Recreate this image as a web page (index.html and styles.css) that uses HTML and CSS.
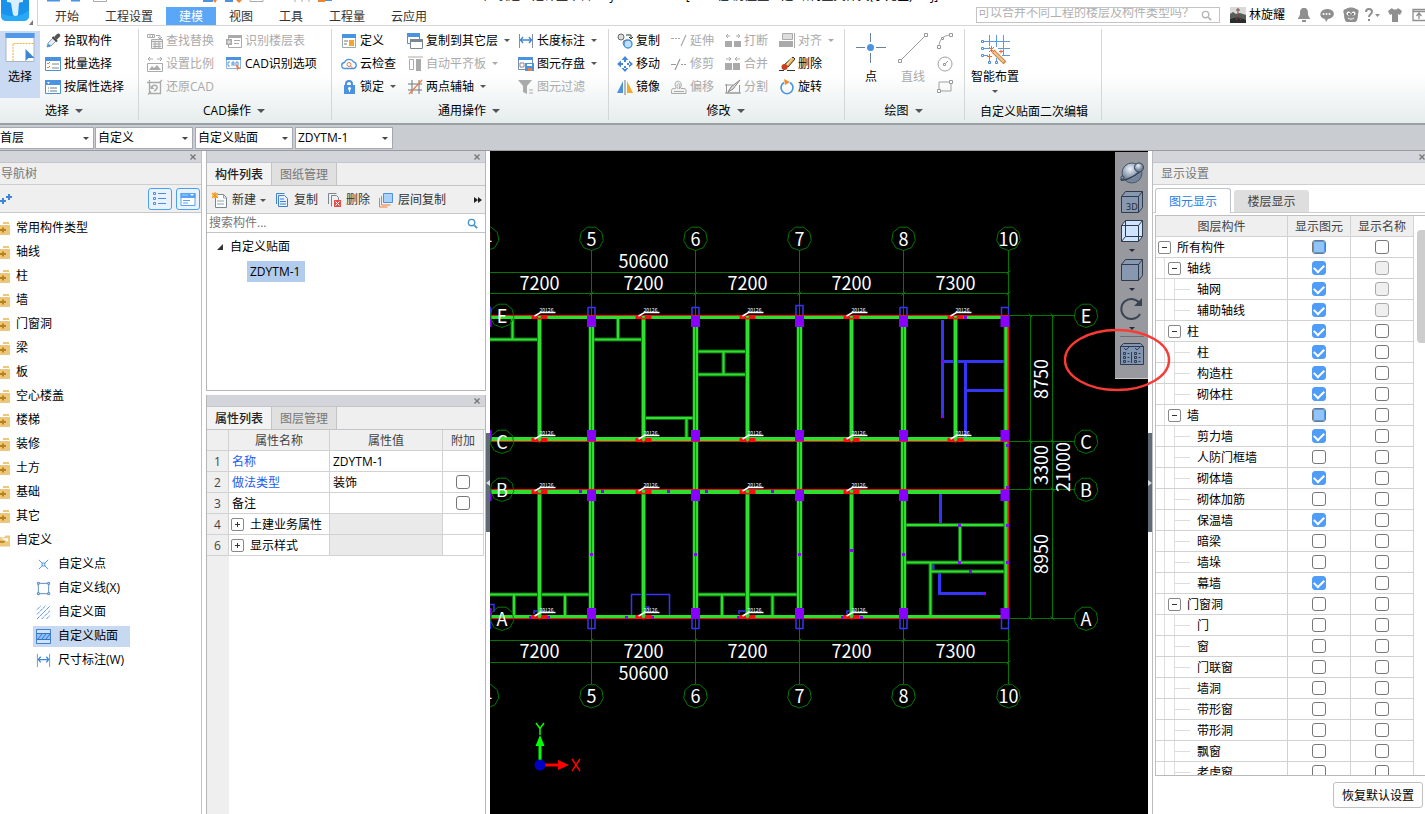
FILE: index.html
```html
<!DOCTYPE html>
<html lang="zh-CN">
<head>
<meta charset="utf-8">
<title>土建计量平台</title>
<link rel="stylesheet" href="styles.css">
</head>
<body>
<svg class="sprite" aria-hidden="true">
  <symbol id="i-pick" viewBox="0 0 16 16"><path d="M2 14l1-4 5-5 3 3-5 5z" fill="#e4eef6" stroke="#8ca2b2"/><path d="M2 14l1-3 3 1-2 2z" fill="#4b93e0"/><path d="M7.500 4l4.500 4.500" stroke="#444" stroke-width="2"/><path d="M9 4l3-3q2-1 3 .500t-.5 2.500L11.500 7z" fill="#555"/></symbol>
  <symbol id="i-batch" viewBox="0 0 16 16"><path d="M.5 2.500h15v12H.5z" fill="#fff" stroke="#4b8fd6"/><path d="M0 1h16v4H0z" fill="#4b93e0"/><path d="M2 7l1 1 2-2M2 11l1 1 2-2" stroke="#e08a2c" fill="none"/><path d="M7 8h7M7 12h7" stroke="#7a8791"/></symbol>
  <symbol id="i-prop" viewBox="0 0 16 16"><path d="M.5 1.500h15v13H.5z" fill="#fff" stroke="#4b8fd6"/><path d="M0 1h16v5H0z" fill="#4b93e0"/><path d="M2 3h3l-1.500 2z" fill="#fff"/><path d="M3 9h1M5 9h7M3 12h1M5 12h7" stroke="#6d7d89"/></symbol>
  <symbol id="i-find" viewBox="0 0 16 16"><path d="M.5 1.500h7v3h-7zM3 1v4M5.500 1v4M9 2.500h4v3M11 4l2 2 2-2" fill="none" stroke="#aaa"/><path d="M4.500 6.500h11v9h-11z" fill="#eee" stroke="#aaa"/><path d="M4 8.500h12M6 11h8M6 13.500h8M8 9v6M12 9v6" stroke="#aaa"/></symbol>
  <symbol id="i-scale" viewBox="0 0 16 16"><path d="M1 3h5M3 1L1 3l2 2M10 3h5M13 1l2 2-2 2" fill="none" stroke="#aaa"/><path d="M.5 7.500h15v8H.5z" fill="#fff" stroke="#aaa"/><path d="M2 14l3-4 2 2 3-3 4 5z" fill="#aaa"/></symbol>
  <symbol id="i-restore" viewBox="0 0 16 16"><path d="M2.500 1v13.500H13.500V3.500H0M1 15.500l3-3M15 1l-3 3" fill="none" stroke="#aaa" stroke-width="1.300"/><path d="M5 8c1-3 6-2 5 1-.5 2-1.500 2-3 3" fill="none" stroke="#aaa" stroke-width="1.500"/><path d="M3.500 6v4h4z" fill="#aaa"/></symbol>
  <symbol id="i-floor" viewBox="0 0 16 16"><path d="M2.500 2.500h13v12h-13z" fill="#fff" stroke="#aaa"/><path d="M2 2h14v3H2zM0 6h6v6H0zM8 7h6v1H8zM8 10h5v1H8z" fill="#aaa"/><path d="M1.500 7.500h3v3h-3z" fill="#ddd"/></symbol>
  <symbol id="i-cad" viewBox="0 0 16 16"><path d="M.5 1.500h14v11H.5z" fill="#fff" stroke="#8fb5df"/><path d="M0 1h15v3H0z" fill="#4b93e0"/><path d="M4 6H2v4h2M6 10V6h2v4M6 8h2M10 6h2v4h-2z" fill="none" stroke="#5b9be0"/><path d="M10 8l5 5h-3l-1 2z" fill="#ee7c45"/></symbol>
  <symbol id="i-define" viewBox="0 0 16 16"><path d="M1.500 1.500h13v13h-13z" fill="#fff" stroke="#9aa"/><path d="M1 1h14v4H1z" fill="#4b93e0"/><path d="M3 8h4M3 11h3" stroke="#777"/><path d="M8 7h5v6H8z" fill="#f3a52e"/></symbol>
  <symbol id="i-cloud" viewBox="0 0 16 16"><path d="M4 12.500a3 3 0 0 1-.5-6A5 5 0 0 1 12.500 6a3.300 3.300 0 0 1 0 6.500z" fill="#fff" stroke="#4b93e0" stroke-width="1.300"/><circle cx="8" cy="8.500" r="2" fill="none" stroke="#ee7c45"/><path d="M9.500 10l2 2" stroke="#ee7c45"/></symbol>
  <symbol id="i-lock" viewBox="0 0 16 16"><path d="M5 7V5a3 3 0 0 1 6 0v2" fill="none" stroke="#4b8fd6" stroke-width="2"/><path d="M3 6h11v9H3z" fill="#4b93e0"/><path d="M8 8h1v5H8z" fill="#fff"/><circle cx="8.500" cy="9.500" r="1.500" fill="#fff"/></symbol>
  <symbol id="i-copyfloor" viewBox="0 0 16 16"><path d="M.5 1.500h12v9H.5z" fill="#fff" stroke="#4b93e0"/><path d="M0 0h13v4H0z" fill="#4b93e0"/><path d="M3.500 6.500h12v9h-12z" fill="#fff" stroke="#7b8790"/><path d="M3 6h13v3H3z" fill="#7b8790"/></symbol>
  <symbol id="i-slab" viewBox="0 0 16 16"><path d="M1 1h15" stroke="#aaa"/><path d="M2.500 3.500h4v10h-4z" fill="#fff" stroke="#aaa"/><path d="M9 3h5v12H9z" fill="#aaa"/></symbol>
  <symbol id="i-axis" viewBox="0 0 16 16"><path d="M5 1v14M12 1v14M1 5h14M1 11h14" stroke="#6d7780"/><path d="M2 15L15 1" stroke="#ee7c45" stroke-width="1.300"/></symbol>
  <symbol id="i-dim" viewBox="0 0 16 16"><path d="M1.500 1v14M14.500 1v14" stroke="#85919a"/><path d="M3 7h10M5 4L2.500 7 5 10M11 4l2.500 3L11 10" fill="none" stroke="#3f86d8" stroke-width="1.400"/></symbol>
  <symbol id="i-save" viewBox="0 0 16 16"><path d="M.5 2.500h14v11H.5z" fill="#fff" stroke="#7b8fa4"/><path d="M0 1h15v3H0z" fill="#4b93e0"/><path d="M2 7h4v4H2z" fill="none" stroke="#889"/><path d="M7 7h9v8H7z" fill="#4b93e0"/><path d="M9 8h5v2H9z" fill="#fff"/><path d="M10 12h4v3h-4z" fill="#ee7c45"/></symbol>
  <symbol id="i-filter" viewBox="0 0 16 16"><path d="M0 1h14L9 7v8l-4-2V7z" fill="#aaa"/><path d="M11 11h4M11 14h4" stroke="#aaa"/></symbol>
  <symbol id="i-copy2" viewBox="0 0 16 16"><circle cx="4" cy="4" r="3" fill="#ddd" stroke="#666"/><circle cx="9" cy="10" r="3" fill="#fff" stroke="#777"/><circle cx="11" cy="11" r="4" fill="#bfe0fb" stroke="#3f8ed8" stroke-width="1.300"/><path d="M9 2h5v3M12 4l2 2 2-2" fill="none" stroke="#333"/></symbol>
  <symbol id="i-move" viewBox="0 0 16 16"><path d="M8 0l3.500 4h-7zM8 16l3.500-4h-7zM0 8l4-3.500v7zM16 8l-4-3.500v7zM7 3h2v3H7zM7 10h2v3H7zM3 7h3v2H3zM10 7h3v2h-3z" fill="#4488d8"/></symbol>
  <symbol id="i-mirror" viewBox="0 0 16 16"><path d="M6 2v12H0z" fill="#4b93e0"/><path d="M8 1v15" stroke="#777"/><path d="M10 2v12h6z" fill="#f3aa25"/></symbol>
  <symbol id="i-extend" viewBox="0 0 16 16"><path d="M0 5.500h3M4 5.500h2M7 5.500h2M10 13l5-11" stroke="#aaa" stroke-width="1.200"/></symbol>
  <symbol id="i-trim" viewBox="0 0 16 16"><path d="M0 8.500h5M4 14L9 3M10 8.500h2M13 8.500h2" stroke="#999" stroke-width="1.200"/></symbol>
  <symbol id="i-offset" viewBox="0 0 16 16"><path d="M.5 14.500v-3q0-2 2-2h2q1 0 0-2C2 .500 12 .500 10 7.500q-1 2 0 2h3q2 0 2 2v3z" fill="#f2f2f2" stroke="#aaa"/><path d="M3 12.500h10M7 10C4 4 10 3 8.500 7.500V10" fill="none" stroke="#aaa"/></symbol>
  <symbol id="i-break" viewBox="0 0 16 16"><path d="M0 8h7v6H0zM9 8h7v6H9z" fill="#aaa"/><path d="M1 3h4M3 1L1 3l2 2M11 3h4M13 1l2 2-2 2" fill="none" stroke="#aaa"/></symbol>
  <symbol id="i-merge" viewBox="0 0 16 16"><path d="M0 7h7v7H0zM8 7h7v7H8z" fill="#aaa"/><path d="M1 3h4M4 1l2 2-2 2M15 3h-4M12 1l-2 2 2 2" fill="none" stroke="#aaa"/></symbol>
  <symbol id="i-split" viewBox="0 0 16 16"><path d="M1.500 5v9h13V6M0 6h8M0 14h16" fill="none" stroke="#999"/><path d="M3 13l3-5 9-7-7 9z" fill="#ddd" stroke="#888"/></symbol>
  <symbol id="i-align" viewBox="0 0 16 16"><path d="M3.500.5h10v6h-10z" fill="#ddd" stroke="#aaa"/><path d="M0 8h14v6H0z" fill="#aaa"/><path d="M15.500 0v15" stroke="#aaa"/></symbol>
  <symbol id="i-erase" viewBox="0 0 16 16"><path d="M14 1l2 2-7 8-4-2z" fill="#f0b550" stroke="#333"/><path d="M13 2L7 10" stroke="#fff3c8"/><circle cx="5.500" cy="11" r="3" fill="#c64020"/><path d="M0 14.500h5M8 14.500h8" stroke="#333"/></symbol>
  <symbol id="i-rotate" viewBox="0 0 16 16"><path d="M11 3.500a6 6 0 1 1-6 0" fill="none" stroke="#4593dc" stroke-width="1.600"/><path d="M5 0l6 3-5 3z" fill="#ee8a32"/></symbol>
  <symbol id="i-arc" viewBox="0 0 16 16"><path d="M2 14C2 7 6 2 14 2" fill="none" stroke="#a0a0a0"/><path d="M.5 12.500h3v3h-3zM12.500.5h3v3h-3zM4.500 4.500h2v2h-2z" fill="#fff" stroke="#999"/></symbol>
  <symbol id="i-circle" viewBox="0 0 16 16"><circle cx="8" cy="8" r="7" fill="none" stroke="#a0a0a0"/><path d="M8 8l3-3" stroke="#999"/><path d="M6.500 7.500h2v2h-2z" fill="#fff" stroke="#999"/></symbol>
  <symbol id="i-rect" viewBox="0 0 16 16"><path d="M2 3h12v9H2z" fill="none" stroke="#a0a0a0"/><path d="M.5 10.500h3v3h-3zM12.500 1.500h3v3h-3z" fill="#fff" stroke="#999"/></symbol>
  <symbol id="i-folder" viewBox="0 0 10 13"><path d="M3 0h6v2H3zM0 3h10v10H0z" fill="#ecc67b"/><path d="M0 8h6M3 5.500v5" stroke="#b98320" stroke-width="2"/></symbol>
  <symbol id="i-folderopen" viewBox="0 0 11 13"><path d="M0 3h5l1-2h5v12H0z" fill="#ecc67b"/><path d="M1 4h8v4z" fill="#fff"/><path d="M0 8h5" stroke="#b98320" stroke-width="2"/></symbol>
  <symbol id="i-pt" viewBox="0 0 16 16"><path d="M3 3l4 4M13 3L9 7M3 13l4-4M13 13L9 9M6.500 6.500h3v3h-3z" fill="none" stroke="#4b93e0"/></symbol>
  <symbol id="i-line" viewBox="0 0 16 16"><path d="M2.500 2.500h11v11h-11z" fill="none" stroke="#5b88b8"/><path d="M1.500 1.500h2v2h-2zM12.500 1.500h2v2h-2zM1.500 12.500h2v2h-2zM12.500 12.500h2v2h-2z" fill="#fff" stroke="#3f86d8"/></symbol>
  <symbol id="i-area" viewBox="0 0 16 16"><path d="M1 5l4-4M1 10l9-9M1 15L15 1M6 15l9-9M11 15l4-4" stroke="#4b8fd6" stroke-dasharray="4 .7"/></symbol>
  <symbol id="i-face" viewBox="0 0 15 15"><path d="M.5.5h14v14H.5z" fill="#cfe4fb" stroke="#3f7fcc"/><path d="M1 4h13v7H1z" fill="#8cc0f8"/><path d="M1 4.500h13M1 10.500h13M2 10l4-5M6 10l4-5M10 10l4-5" stroke="#3574bd"/></symbol>
  <symbol id="i-new" viewBox="0 0 16 16"><path d="M3.500 2.500h8l3 3v10h-11z" fill="#fff" stroke="#7b8790"/><path d="M11.500 2v4h3M5 9h7M5 12h7" fill="none" stroke="#8fa0ae"/><path d="M0 1h6v5H0z" fill="#f8c65a"/><path d="M0 1l6 5M6 1L0 6M3 0v6" stroke="#ee8b25"/></symbol>
  <symbol id="i-copydoc" viewBox="0 0 16 16"><path d="M2.500 12V1.500h8" fill="none" stroke="#3f7fcc"/><path d="M4.500 3.500h6l3 3v8h-9z" fill="#e6f2ff" stroke="#3f7fcc"/><path d="M6 7h4M6 9.500h6M6 12h6" stroke="#3f7fcc"/></symbol>
  <symbol id="i-deldoc" viewBox="0 0 16 16"><path d="M2.500 12V1.500h8M5.500 14.500v-11h5l2 2V8" fill="none" stroke="#7b8790"/><path d="M8 8h7v7H8z" fill="#e44f4f"/><path d="M9.500 9.500l4 4M13.500 9.500l-4 4" stroke="#fff"/></symbol>
  <symbol id="i-layers" viewBox="0 0 16 16"><path d="M1.500 6v9h8" fill="none" stroke="#ee7c32"/><path d="M3.500 4v9h9" fill="none" stroke="#ee7c32"/><path d="M5.500 1.500h9v9h-9z" fill="#a9d1fb" stroke="#4b93e0"/></symbol>
  <symbol id="i-glass" viewBox="0 0 12 12"><circle cx="5" cy="5" r="3.500" fill="none" stroke="currentColor" stroke-width="1.500"/><path d="M8 8l3 3" stroke="currentColor" stroke-width="2"/></symbol>
  <symbol id="i-cube" viewBox="0 0 24 24"><path d="M1.500 6.500l4-5h17v16l-4 5h-17z" fill="#8798b0" stroke="#2f3a4b"/><path d="M1.500 6.500h17v16M18.500 6.500l4-5" fill="none" stroke="#2f3a4b"/></symbol>
  <symbol id="i-close" viewBox="0 0 6 6"><path d="M.5.5l5 5M5.500.5l-5 5" stroke="#777" stroke-width="1.400"/></symbol>
</svg>

<header class="topbar">
  <div class="brand">
    <svg class="logo" viewBox="0 0 38 25" aria-hidden="true">
      <defs><linearGradient id="lg" x1="0" y1="0" x2="0" y2="1"><stop offset="0" stop-color="#1c8fe8"/><stop offset="1" stop-color="#1593f0"/></linearGradient></defs>
      <rect x="1" y="-9" width="28" height="30" rx="5" fill="url(#lg)"/>
      <path d="M1 13c7 4 20 5 28-3v6q0 5-5 5H6q-5 0-5-5z" fill="#35b7fb" opacity=".6"/>
      <path d="M7-2h16v4q-3 0-4 1l-1 12q-2 2-5 0L11 3q-1-1-4-1z" fill="#d8f0fd"/>
      <path d="M33 20v5h-4z" fill="#777"/>
    </svg>
  </div>
  <div class="topmain">
    <svg class="quick" viewBox="38 0 310 3" aria-hidden="true">
      <path d="M47 0v1.500h13V0M71 0v1.500h9V0M203 0h10v2h-10zM225 0h8v2h-8zM322 0h10v1h-10z" fill="#4b93e0"/>
      <path d="M93.500 0v1.500h13V0M250 0v1.500h13V0M295 0v2M302 0v2M309 0v2" fill="none" stroke="#aaa"/>
      <path d="M213 0h4l-2 3zM236 0h6l-3 3zM318 0h7v2h-7z" fill="#ee8432"/>
    </svg>
    <div class="wintitle"><span>广联达土建计量平台 GTJ</span><span>[C:\工程\房屋量土建\结构量文件夹(小元区).GTJ]</span></div>
    <nav class="tabs">
      <a href="#">开始</a><a href="#">工程设置</a><a href="#" class="on">建模</a><a href="#">视图</a><a href="#">工具</a><a href="#">工程量</a><a href="#">云应用</a>
    </nav>
    <div class="account">
      <div class="ask"><input type="text" aria-label="搜索" placeholder="可以合并不同工程的楼层及构件类型吗？"><svg viewBox="0 0 12 12"><use href="#i-glass"/></svg></div>
      <svg class="avatar" viewBox="0 0 16 16" aria-hidden="true"><path d="M0 0h16v16H0z" fill="#d8dad8"/><path d="M0 7l3-2 3 2 4-1 6 2v8H0z" fill="#585f59"/><path d="M0 12l8-2 8 3v3H0z" fill="#292d2b"/><path d="M8 1v9M6 3h4M8 9l-2 4M8 9l3 4" stroke="#80474a"/></svg>
      <span class="user">林旋耀</span>
      <svg class="acts" viewBox="0 0 127 16" aria-hidden="true"><g fill="#8f8f8f">
        <path d="M6 1c3 0 4 2 4 5 0 4 2 4 2 6H0c0-2 2-2 2-6 0-3 1-5 4-5zM4 13h4v2H4z"/>
        <path d="M29 2c9 0 9 9 1 10l-2 3-1-3c-7-1-6-10 2-10z"/>
        <path d="M48 2c2-2 8-2 10 0 3 0 3 3 2 5 0 4-1 8-3 8h-8c-2 0-3-4-3-8-1-2-1-5 2-5z"/>
        <path d="M77 7h5l-2.500 3zM94 1c1 2 5 2 6 0l4 3-2 4-2-1v8h-6V7l-2 1-2-4z"/></g>
        <g fill="#fff"><circle cx="25.500" cy="7" r="1"/><circle cx="28.500" cy="7" r="1"/><circle cx="31.500" cy="7" r="1"/><circle cx="50.500" cy="6.500" r="2"/><circle cx="55.500" cy="6.500" r="2"/></g>
        <path d="M50 11c2 1.500 4 1.500 6 0" fill="none" stroke="#fff"/>
        <circle cx="51" cy="7" r="1" fill="#555"/><circle cx="55" cy="7" r="1" fill="#555"/>
        <path d="M68 5c0-4 6-4 6 0 0 2-3 2-3 5M71 12v2" fill="none" stroke="#8f8f8f" stroke-width="2"/>
        <path d="M115 2.500h14v11h-14zM115 4.500h14M121 12V7M118.500 9l2.500-3 2.500 3" fill="none" stroke="#8f8f8f" stroke-width="1.300"/>
      </svg>
    </div>
  </div>
</header>

<section class="ribbon" aria-label="建模">
  <div class="group g1">
    <div class="gbody">
      <button class="big active"><svg viewBox="0 0 29 30" class="i30"><path d="M.5.500h28v28H.5z" fill="#fff" stroke="#a8b6c8"/><path d="M0 0h29v5H0z" fill="#5298e8"/><path d="M7.500 28V10.500H28" fill="none" stroke="#f0b030" stroke-dasharray="2 1"/><path d="M20 16v12l3-3h6z" fill="#3c84d6"/></svg>选择</button>
      <div class="col"><button><svg><use href="#i-pick"/></svg>拾取构件</button><button><svg><use href="#i-batch"/></svg>批量选择</button><button><svg><use href="#i-prop"/></svg>按属性选择</button></div>
    </div>
    <button class="glabel">选择<i class="tri"></i></button>
  </div>
  <div class="group g2">
    <div class="gbody">
      <div class="col"><button disabled><svg><use href="#i-find"/></svg>查找替换</button><button disabled><svg><use href="#i-scale"/></svg>设置比例</button><button disabled><svg><use href="#i-restore"/></svg>还原CAD</button></div>
      <div class="col"><button disabled><svg><use href="#i-floor"/></svg>识别楼层表</button><button><svg><use href="#i-cad"/></svg>CAD识别选项</button></div>
    </div>
    <button class="glabel">CAD操作<i class="tri"></i></button>
  </div>
  <div class="group g3">
    <div class="gbody">
      <div class="col"><button><svg><use href="#i-define"/></svg>定义</button><button><svg><use href="#i-cloud"/></svg>云检查</button><button><svg><use href="#i-lock"/></svg>锁定<i class="tri s"></i></button></div>
      <div class="col"><button><svg><use href="#i-copyfloor"/></svg>复制到其它层<i class="tri s"></i></button><button disabled><svg><use href="#i-slab"/></svg>自动平齐板<i class="tri s"></i></button><button><svg><use href="#i-axis"/></svg>两点辅轴<i class="tri s"></i></button></div>
      <div class="col"><button><svg><use href="#i-dim"/></svg>长度标注<i class="tri s"></i></button><button><svg><use href="#i-save"/></svg>图元存盘<i class="tri s"></i></button><button disabled><svg><use href="#i-filter"/></svg>图元过滤</button></div>
    </div>
    <button class="glabel">通用操作<i class="tri"></i></button>
  </div>
  <div class="group g4">
    <div class="gbody">
      <div class="col"><button><svg><use href="#i-copy2"/></svg>复制</button><button><svg><use href="#i-move"/></svg>移动</button><button><svg><use href="#i-mirror"/></svg>镜像</button></div>
      <div class="col"><button disabled><svg><use href="#i-extend"/></svg>延伸</button><button disabled><svg><use href="#i-trim"/></svg>修剪</button><button disabled><svg><use href="#i-offset"/></svg>偏移</button></div>
      <div class="col"><button disabled><svg><use href="#i-break"/></svg>打断</button><button disabled><svg><use href="#i-merge"/></svg>合并</button><button disabled><svg><use href="#i-split"/></svg>分割</button></div>
      <div class="col"><button disabled><svg><use href="#i-align"/></svg>对齐<i class="tri s"></i></button><button><svg><use href="#i-erase"/></svg>删除</button><button><svg><use href="#i-rotate"/></svg>旋转</button></div>
    </div>
    <button class="glabel">修改<i class="tri"></i></button>
  </div>
  <div class="group g5">
    <div class="gbody">
      <button class="big"><svg viewBox="0 0 30 30" class="i30"><path d="M14.500 0v30M0 14.500h30" stroke="#6b8296"/><path d="M9 14.500h11M14.500 9v11" stroke="#fff" stroke-width="2"/><circle cx="14.500" cy="14.500" r="3.500" fill="#4b93e0"/></svg>点</button>
      <button class="big" disabled><svg viewBox="0 0 30 30" class="i30"><path d="M3 27L27 3" stroke="#999"/><path d="M.5 26.500h3v3h-3zM26.500.5h3v3h-3z" fill="#fff" stroke="#999"/></svg>直线</button>
      <div class="col icons"><button disabled aria-label="弧线"><svg><use href="#i-arc"/></svg></button><button disabled aria-label="圆"><svg><use href="#i-circle"/></svg></button><button disabled aria-label="矩形"><svg><use href="#i-rect"/></svg></button></div>
    </div>
    <button class="glabel">绘图<i class="tri"></i></button>
  </div>
  <div class="group g6">
    <div class="gbody">
      <button class="big wide"><svg viewBox="0 0 30 30" class="i30"><path d="M3 7.500h27M3 14.500h7M18 14.500h12M3 21.500h5M22 21.500h8M9.500 1v11M9.500 24v4M16.500 1v12M16.500 24v4M23.500 1v20" stroke="#5b9be6" fill="none"/><path d="M1.500 6.500h2v2h-2zM1.500 13.500h2v2h-2zM1.500 20.500h2v2h-2zM8.500 27.500h2v2h-2zM15.500 27.500h2v2h-2z" fill="#fff" stroke="#4b8fdc"/><path d="M13 17l12 12" stroke="#c98547" stroke-width="4"/><path d="M13 17l11 11" stroke="#f4c58f" stroke-width="2"/><path d="M9 13l5 5M14 13l-5 5M11.500 12v6M7 22.500h5M9.500 20v5M19 17.500h4M21 15.500v4" stroke="#ee6b30"/></svg>智能布置<i class="tri s"></i></button>
    </div>
    <div class="glabel low">自定义贴面二次编辑</div>
  </div>
</section>

<div class="selectors">
  <label class="pick first"><select aria-label="楼层"><option>首层</option></select></label>
  <label class="pick"><select aria-label="构件类别"><option>自定义</option></select></label>
  <label class="pick"><select aria-label="构件类型"><option>自定义贴面</option></select></label>
  <label class="pick"><select aria-label="构件"><option>ZDYTM-1</option></select></label>
</div>

<main class="work">
  <aside class="nav">
    <div class="strip"><button aria-label="关闭"><svg><use href="#i-close"/></svg></button></div>
    <h2>导航树</h2>
    <div class="navtools">
      <svg class="plus" viewBox="0 0 12 12" aria-hidden="true"><path d="M0 8h6M3 5v6M6 4h6M9 1v6" stroke="#3f86d8" stroke-width="2"/></svg>
      <button aria-label="列表"><svg viewBox="0 0 16 16"><path d="M1.500 1.500h2v2h-2zM1.500 6.500h2v2h-2zM1.500 11.500h2v2h-2zM6 2.500h8M6 7.500h8M6 12.500h8" fill="none" stroke="#4b8fd6"/></svg></button>
      <button aria-label="面板"><svg viewBox="0 0 16 16"><path d="M1 2.500h14v12H1z" fill="#fff" stroke="#57a3f5"/><path d="M.5 2h15v5H.5z" fill="#57a3f5"/><path d="M3 3.500v1M5 3.500v1M7 3.500v1" stroke="#fff"/><path d="M10 3h4l-2 2z" fill="#fff"/><path d="M3 9.500h7M3 12h5" stroke="#57a3f5"/></svg></button>
    </div>
    <ul class="navtree">
      <li><svg><use href="#i-folder"/></svg>常用构件类型</li><li><svg><use href="#i-folder"/></svg>轴线</li><li><svg><use href="#i-folder"/></svg>柱</li><li><svg><use href="#i-folder"/></svg>墙</li><li><svg><use href="#i-folder"/></svg>门窗洞</li><li><svg><use href="#i-folder"/></svg>梁</li><li><svg><use href="#i-folder"/></svg>板</li><li><svg><use href="#i-folder"/></svg>空心楼盖</li><li><svg><use href="#i-folder"/></svg>楼梯</li><li><svg><use href="#i-folder"/></svg>装修</li><li><svg><use href="#i-folder"/></svg>土方</li><li><svg><use href="#i-folder"/></svg>基础</li><li><svg><use href="#i-folder"/></svg>其它</li><li><svg><use href="#i-folderopen"/></svg>自定义</li>
      <li class="sub"><span><svg><use href="#i-pt"/></svg>自定义点</span></li><li class="sub"><span><svg><use href="#i-line"/></svg>自定义线(X)</span></li><li class="sub"><span><svg><use href="#i-area"/></svg>自定义面</span></li><li class="sub"><span class="sel"><svg><use href="#i-face"/></svg>自定义贴面</span></li><li class="sub"><span><svg><use href="#i-dim"/></svg>尺寸标注(W)</span></li>
    </ul>
  </aside>

  <div class="mid">
    <section class="panel top">
      <div class="strip"><button aria-label="关闭"><svg><use href="#i-close"/></svg></button></div>
      <div class="ptabs"><button class="on">构件列表</button><button>图纸管理</button></div>
      <div class="ptools"><button><svg><use href="#i-new"/></svg>新建<i class="tri s"></i></button><button><svg><use href="#i-copydoc"/></svg>复制</button><button><svg><use href="#i-deldoc"/></svg>删除</button><button><svg><use href="#i-layers"/></svg>层间复制</button><svg class="more" viewBox="0 0 8 6"><path d="M0 0l4 3-4 3zM4 0l4 3-4 3z" fill="#222"/></svg></div>
      <div class="psearch"><input type="text" aria-label="搜索构件" placeholder="搜索构件..."><svg viewBox="0 0 12 12"><use href="#i-glass"/></svg></div>
      <ul class="ctree"><li><svg viewBox="0 0 6 6"><path d="M6 0v6H0z" fill="#333"/></svg>自定义贴面</li><li class="leaf"><span>ZDYTM-1</span></li></ul>
    </section>
    <section class="panel bottom">
      <div class="strip"><button aria-label="关闭"><svg><use href="#i-close"/></svg></button></div>
      <div class="ptabs"><button class="on">属性列表</button><button>图层管理</button></div>
      <div class="pbody">
      <table class="props">
        <colgroup><col class="c1"><col class="c2"><col class="c3"><col class="c4"></colgroup>
        <tr><th></th><th>属性名称</th><th>属性值</th><th>附加</th></tr>
        <tr><th>1</th><td class="blue">名称</td><td>ZDYTM-1</td><td></td></tr>
        <tr><th>2</th><td class="blue">做法类型</td><td>装饰</td><td class="mid-c"><input type="checkbox" aria-label="做法类型附加"></td></tr>
        <tr><th>3</th><td>备注</td><td></td><td class="mid-c"><input type="checkbox" aria-label="备注附加"></td></tr>
        <tr><th>4</th><td><div class="exp"><button class="tog plusbox" aria-label="展开"></button>土建业务属性</div></td><td class="off"></td><td></td></tr>
        <tr><th>6</th><td><div class="exp"><button class="tog plusbox" aria-label="展开"></button>显示样式</div></td><td class="off"></td><td></td></tr>
      </table>
      </div>
    </section>
  </div>

  <div class="split"><button aria-label="收起左侧"><svg viewBox="0 0 4 6"><path d="M4 0v6L0 3z" fill="#d8dde2"/></svg></button></div>

  <section class="canvas">
    <svg id="plan" viewBox="490 151 658 663" preserveAspectRatio="xMinYMin slice" role="img" aria-label="首层平面图"></svg>
    <div class="viewbar">
      <button aria-label="动态观察"><svg viewBox="0 0 24 24"><defs><radialGradient id="ball" cx=".4" cy=".3"><stop offset="0" stop-color="#eef4fb"/><stop offset="1" stop-color="#74859b"/></radialGradient></defs><circle cx="12" cy="12" r="10" fill="url(#ball)" stroke="#46566b"/><path d="M1 18C0 22 19 15 23 6" fill="none" stroke="#344052" stroke-width="1.500"/><circle cx="19" cy="6.500" r="4.500" fill="url(#ball)" stroke="#344052"/><circle cx="2.500" cy="16.500" r="1.500" fill="#8798b0" stroke="#344052"/></svg></button>
      <button class="b3d" aria-label="三维"><svg viewBox="0 0 24 24"><use href="#i-cube"/><text x="6" y="20" class="t3d">3D</text></svg></button>
      <button aria-label="俯视"><svg viewBox="0 0 24 24"><path d="M1.500 6.500l4-5h17v16l-4 5h-17z" fill="#cfe5ff" stroke="#2f3a4b"/><path d="M1.500 6.500h17v16M18.500 6.500l4-5M5.500 1.500v16h17M5.500 17.500l-4 5" fill="none" stroke="#2f3a4b"/></svg></button>
      <i class="tri s"></i>
      <button aria-label="实体"><svg viewBox="0 0 24 24"><use href="#i-cube"/></svg></button>
      <i class="tri s"></i>
      <button aria-label="旋转视图"><svg viewBox="0 0 24 24"><path d="M20 17a10 10 0 1 1 0-10" fill="none" stroke="#39434f" stroke-width="2"/><path d="M22 1v8h-8z" fill="#39434f"/></svg></button>
      <i class="tri s"></i>
      <hr>
      <button aria-label="显示设置"><svg viewBox="0 0 24 24"><path d="M.5 4.500l3-3h17l3 3v18H.5z" fill="#8296b3" stroke="#2f3a4b"/><path d="M0 4.500h24M11.500 10v11M4 6l2 2 3-3M15 6l2 2 3-3" fill="none" stroke="#2f3a4b"/><path d="M3.500 10.500h2v2h-2zM3.500 14.500h2v2h-2zM3.500 18.500h2v2h-2zM14.500 10.500h2v2h-2zM14.500 14.500h2v2h-2zM14.500 18.500h2v2h-2zM7.500 11.500h2M7.500 15.500h2M7.500 19.500h2M18.500 11.500h2M18.500 15.500h2M18.500 19.500h2" fill="none" stroke="#2f3a4b"/></svg></button>
    </div>
    <svg class="mark" viewBox="0 0 108 64" aria-hidden="true"><ellipse cx="54" cy="32" rx="52" ry="30" fill="none" stroke="#f83b36" stroke-width="2.500"/></svg>
  </section>

  <div class="split"><button aria-label="收起右侧"><svg viewBox="0 0 4 6"><path d="M0 0v6l4-3z" fill="#d8dde2"/></svg></button></div>

  <aside class="display">
    <div class="strip"><button aria-label="关闭"><svg><use href="#i-close"/></svg></button></div>
    <h2>显示设置</h2>
    <div class="dtabs"><button class="on">图元显示</button><button>楼层显示</button></div>
    <div class="dscroll">
      <table class="layers">
        <colgroup><col><col class="n"><col class="n"></colgroup>
        <thead><tr><th>图层构件</th><th>显示图元</th><th>显示名称</th></tr></thead>
        <tbody id="layers"></tbody>
      </table>
      <div class="track"><div class="thumb"></div></div>
    </div>
    <div class="dfoot"><button>恢复默认设置</button></div>
  </aside>
</main>
<script src="app.js"></script>
</body>
</html>
```

FILE: styles.css
```css
* { box-sizing: border-box; }
body { margin: 0; height: 100vh; display: flex; flex-direction: column; overflow: hidden; background: #fff; color: #000; font: 12px/16px "Open Sans", "Noto Sans CJK SC", sans-serif; }
button, input, select { font: inherit; color: inherit; margin: 0; padding: 0; border: 0; background: none; }
button { white-space: nowrap; }
svg { display: block; flex: none; }
ul { list-style: none; margin: 0; padding: 0; }
h2 { margin: 0; font: inherit; }
.sprite { position: absolute; width: 0; height: 0; }
.tri { flex: none; border: 4px solid transparent; border-top-color: #555; border-bottom: 0; width: 0; height: 0; }
.tri.s { border-width: 3px; border-bottom: 0; }

.topbar { display: flex; height: 26px; flex: none; }
.brand { width: 38px; border-right: 1px solid #d5d5d5; }
.logo { width: 38px; height: 25px; }
.topmain { flex: 1; display: flex; position: relative; overflow: hidden; align-items: flex-end; border-bottom: 1px solid #d5d5d5; padding-left: 4px; }
.quick { position: absolute; left: 0; top: 0; width: 310px; height: 3px; }
.wintitle { position: absolute; left: 446px; top: -12px; display: flex; gap: 72px; white-space: nowrap; }
.tabs { display: flex; }
.tabs a { padding: 2px 13px 0; color: #333; text-decoration: none; }
.tabs .on { background: #5aa7f8; color: #fff; }
.account { margin-left: auto; display: flex; align-items: center; height: 20px; }
.ask { width: 244px; height: 16px; border: 1px solid #c4c4c4; display: flex; align-items: center; padding: 0 7px 0 1px; color: #b5b5b5; }
.ask input { flex: 1; min-width: 0; height: 14px; padding-bottom: 4px; outline: 0; }
.ask input::placeholder, .psearch input::placeholder { color: #b0b0b0; opacity: 1; }
.ask svg { width: 11px; height: 11px; }
.avatar { width: 16px; height: 16px; margin: 0 3px 0 10px; }
.user { width: 36px; }
.acts { width: 127px; height: 16px; margin-left: 13px; }

.ribbon { display: flex; flex: none; height: 97px; padding-top: 3px; background: linear-gradient(#fff 50%, #e6ecec); }
.group { display: flex; flex-direction: column; align-items: center; border-right: 1px solid #d4d7d7; margin-bottom: 3px; }
.gbody { display: flex; align-self: stretch; height: 69px; }
.col { display: flex; flex-direction: column; }
.col button { display: flex; align-items: center; height: 23px; gap: 3px; }
.col svg { width: 16px; height: 16px; }
.col .tri { margin-left: 3px; }
button:disabled { color: #aaa; }
button:disabled .tri { border-top-color: #aaa; }
.big { display: flex; flex-direction: column; align-items: center; width: 40px; padding-top: 4px; gap: 6px; }
.big.active { background: #c9daf2; margin-top: 2px; height: 67px; padding-top: 2px; }
.big .i30 { width: 30px; height: 30px; }
.big.wide { width: 60px; padding-top: 5px; gap: 5px; }
.glabel { display: flex; align-items: center; gap: 6px; margin-top: 5px; }
.glabel.low { margin-top: 7px; }
.g1 { width: 139px; } .g1 .col { margin-left: 5px; } .g1 .glabel { margin-right: 10px; }
.g2 { width: 193px; } .g2 .gbody { display: grid; grid-template-columns: 79px auto; padding-left: 8px; justify-content: start; }
.g2 .glabel { margin-right: 2px; }
.g3 { width: 277px; } .g3 .gbody { display: grid; grid-template-columns: 66px 111px auto; padding-left: 9px; justify-content: start; }
.g3 .glabel { margin-right: 2px; }
.g4 { width: 236px; } .g4 .gbody { display: grid; grid-template-columns: 54px 54px 54px auto; padding-left: 8px; justify-content: start; }
.g4 .glabel { margin-right: 2px; }
.g5 { width: 120px; } .g5 .gbody { padding-left: 6px; } .g5 .big { margin-right: 2px; } .g5 .icons { margin-left: 2px; }
.g5 .glabel { margin-right: 2px; }
.g6 { width: 137px; }
.g6 .glabel { margin-left: 2px; }

.selectors { display: flex; flex: none; gap: 2px; height: 28px; padding-top: 3px; background: #c9ccd1; border-top: 2px solid #9a9fa3; border-bottom: 1px solid #999ba0; }
.pick { position: relative; width: 98px; height: 22px; margin-top: -1px; }
.pick select { appearance: none; width: 100%; height: 22px; background: #fff; border: 1px solid #a4a7b4; padding: 0 12px 0 2px; border-radius: 0; }
.pick.first { width: 94px; margin-right: -1px; }
.pick.first select { border-left: 0; padding: 0; }
.pick::after { content: ""; position: absolute; right: 5px; top: 10px; border: 3px solid transparent; border-top-color: #444; border-bottom: 0; }

.work { flex: 1; display: flex; min-height: 0; }
.strip { height: 12px; flex: none; background: #d4d5da; display: flex; justify-content: flex-end; align-items: center; padding-right: 5px; border-bottom: 1px solid #c4c5ca; }
.strip svg { width: 6px; height: 6px; }
.nav { width: 202px; border-right: 1px solid #bfc0c4; display: flex; flex-direction: column; margin-right: 4px; }
.nav h2, .display h2 { height: 22px; flex: none; line-height: 22px; background: #efefef; color: #777; border-bottom: 1px solid #cdced2; }
.nav h2 { padding-left: 1px; }
.navtools { height: 28px; flex: none; background: #efefef; border-bottom: 1px solid #c8c8cc; display: flex; align-items: center; gap: 4px; padding-right: 1px; }
.plus { width: 12px; height: 12px; margin-right: auto; }
.navtools button { width: 24px; height: 22px; border: 1px solid #4d9ff0; border-radius: 3px; background: #e8f3ff; display: grid; place-items: center; }
.navtools button svg { width: 16px; height: 16px; }
.navtree { padding-top: 3px; }
.navtree li { height: 24px; display: flex; align-items: center; gap: 6px; }
.navtree li > svg { width: 10px; height: 13px; }
.navtree .sub { padding-left: 33px; }
.sub span { display: flex; align-items: center; height: 21px; gap: 7px; padding: 0 12px 0 3px; }
.sub svg { width: 15px; height: 15px; }
.sub .sel { background: #c7d9f1; }

.mid { width: 280px; display: flex; flex-direction: column; gap: 4px; }
.panel { border: 1px solid #b4b5b9; border-top: 0; display: flex; flex-direction: column; }
.panel.top { height: 240px; }
.panel.bottom { flex: 1; border-bottom: 0; }
.ptabs { height: 23px; display: flex; flex: none; background: #efefef; border-bottom: 1px solid #c4c4c8; }
.ptabs button { width: 65px; padding-top: 1px; color: #777; background: #e0e0e0; border-right: 1px solid #c4c4c8; }
.ptabs .on { font-weight: 500; color: #222; background: #f3f3f3; }
.ptools { height: 28px; flex: none; display: flex; align-items: center; background: #efefef; border-bottom: 1px solid #c8c8cc; padding: 1px 3px 0 5px; gap: 8px; color: #333; }
.ptools button { display: flex; align-items: center; gap: 4px; }
.ptools button svg { width: 16px; height: 16px; }
.ptools .more { width: 8px; height: 6px; margin-left: auto; }
.psearch { height: 19px; flex: none; display: flex; align-items: center; border-bottom: 1px solid #c4c4c8; padding: 0 7px 0 2px; color: #4494d0; }
.psearch input { flex: 1; min-width: 0; outline: 0; }
.psearch input::placeholder { color: #777; }
.psearch svg { width: 11px; height: 11px; }
.ctree { padding-top: 2px; }
.ctree li { height: 24px; display: flex; align-items: center; gap: 7px; padding-left: 10px; }
.ctree svg { width: 6px; height: 6px; }
.ctree .leaf { padding-left: 40px; }
.leaf span { background: #b2cced; height: 21px; line-height: 21px; padding: 0 5px 0 3px; }
.pbody { flex: 1; background: linear-gradient(90deg, #efefef 22px, #fff 22px); }
.props, .layers { border-collapse: separate; border-spacing: 0; table-layout: fixed; }
.props { width: 277px; }
.c1 { width: 22px; } .c2 { width: 101px; } .c3 { width: 113px; } .c4 { width: 41px; }
th, td { height: 21px; padding: 0; border: 0 solid #d2d2d2; border-width: 0 1px 1px 0; font-weight: normal; white-space: nowrap; line-height: 16px; }
th { background: #efefef; color: #444; }
.props td { padding: 1px 0 0 3px; background: #fff; }
.props th { padding-top: 1px; }
.props .off { background: #eaeaea; }
.props .blue { color: #1a5cf0; }
.props .mid-c { padding: 0; text-align: center; line-height: 0; }
.exp { display: flex; align-items: center; gap: 6px; margin-left: -1px; }
.tog { width: 13px; height: 13px; border: 1px solid #888; border-radius: 2px; flex: none; background: linear-gradient(#333, #333) center / 5px 1px no-repeat #fff; }
.tog.plusbox { background: linear-gradient(#333, #333) center / 5px 1px no-repeat, linear-gradient(#333, #333) center / 1px 5px no-repeat #fff; }
input[type=checkbox] { appearance: none; display: inline-grid; place-items: center; vertical-align: middle; width: 14px; height: 14px; border: 1px solid #777; border-radius: 3px; background: #fff; }
input[type=checkbox]:checked { background: #4f9df8; border-color: #4f9df8; }
input[type=checkbox]:checked::after { content: ""; width: 8px; height: 5px; border: 2px solid #fff; border-width: 0 0 2px 2px; transform: translateY(-1px) rotate(-45deg); }
input[type=checkbox]:indeterminate::after { content: ""; width: 10px; height: 10px; background: #90c4fb; border: 1px solid #4c98f0; border-radius: 2px; }
input[type=checkbox]:disabled { background: #efefef; border-color: #aaa; }

.split { width: 4px; display: flex; align-items: center; }
.split button { width: 4px; height: 99px; background: #5f6b77; display: flex; align-items: center; }
.split svg { width: 4px; height: 6px; }

.canvas { flex: 1; min-width: 0; position: relative; background: #000; }
#plan { width: 100%; height: 100%; }
.viewbar { position: absolute; right: 0; top: 1px; width: 33px; background: #97999f; display: flex; flex-direction: column; align-items: center; padding: 9px 0 12px; gap: 5px; border-bottom: 1px solid #ccc; }
.viewbar svg { width: 24px; height: 24px; }
.viewbar .tri { border-top-color: #222b38; margin: 1px 0; }
.viewbar hr { width: 24px; margin: 0; border: 0; border-top: 1px solid #6d6e72; }
.t3d { font: 9px "Noto Sans", sans-serif; fill: #222b38; }
.mark { position: absolute; right: -23px; top: 177px; width: 108px; height: 64px; z-index: 2; pointer-events: none; }
#plan text { font-family: "Noto Sans CJK SC", sans-serif; font-size: 18px; fill: #fff; text-anchor: middle; }
#plan .tag { font-size: 5px; }
#plan .ax { fill: none; stroke: #007800; }
#plan .wd { fill: none; stroke: #176d17; }
#plan .wg { fill: none; stroke: #2ce02c; }
#plan .wb { fill: none; stroke: #3535f5; }
#plan .red { fill: none; stroke: #f01010; }
#plan .pier { fill: #8a00ff; }

.display { width: 273px; display: flex; flex-direction: column; border-left: 1px solid #bbbcc0; }
.display .strip { padding-right: 0; }
.display h2 { padding-left: 8px; }
.dtabs { display: flex; gap: 3px; align-items: flex-end; height: 28px; flex: none; padding-left: 2px; background: #fff; margin-bottom: 2px; border-bottom: 1px solid #ccc; }
.dtabs button { width: 75px; height: 22px; padding-top: 1px; background: #dedede; color: #444; border-radius: 3px 3px 0 0; }
.dtabs .on { width: 76px; height: 25px; margin-bottom: -1px; background: #fff; color: #2d7fe0; border: 1px solid #bcc3cc; border-bottom: 0; }
.dscroll { flex: 1; min-height: 0; overflow: hidden; display: flex; align-items: flex-start; margin-left: 2px; border-top: 1px solid #c0c0c4; border-bottom: 1px solid #b8b8bc; border-left: 1px solid #c0c0c4; }
.layers { flex: 1; }
.layers .n { width: 63px; }
.layers th { padding-top: 1px; }
.layers td + td { text-align: center; line-height: 0; }
.cell { display: flex; align-items: center; height: 20px; }
.cell span { padding-top: 1px; }
.l0 { padding-left: 2px; gap: 6px; }
.l1, .l2 { padding-left: 8px; }
.rail { align-self: stretch; border-left: 1px solid #e0e0e0; width: 4px; flex: none; }
.l1 .tog { margin-right: 6px; }
.l2 .rail { width: 10px; }
.dash { border-top: 1px solid #dcdcdc; width: 15px; margin-right: 7px; }
.l2 .rail + .rail { width: 1px; }
.track { width: 11px; flex: none; align-self: stretch; padding: 14px 0 0 3px; }
.thumb { height: 113px; background: #cdcdcd; border-radius: 4px 0 0 4px; }
.dfoot { flex: none; height: 38px; display: flex; justify-content: flex-end; align-items: flex-start; padding: 6px 2px 0; }
.dfoot button { width: 90px; height: 26px; padding-top: 1px; border: 1px solid #c0c0c0; border-radius: 3px; background: #fdfdfd; }
```

FILE: app.js
```js
// level, name, shown (1 yes, 0 no, 2 partly), name box disabled
const layers = [
  [0, '所有构件', 2], [1, '轴线', 1, 1], [2, '轴网', 1, 1], [2, '辅助轴线', 1, 1],
  [1, '柱', 1], [2, '柱', 1], [2, '构造柱', 1], [2, '砌体柱', 1],
  [1, '墙', 2], [2, '剪力墙', 1], [2, '人防门框墙', 0], [2, '砌体墙', 1], [2, '砌体加筋', 0],
  [2, '保温墙', 1], [2, '暗梁', 0], [2, '墙垛', 0], [2, '幕墙', 1],
  [1, '门窗洞', 0], [2, '门', 0], [2, '窗', 0], [2, '门联窗', 0], [2, '墙洞', 0],
  [2, '带形窗', 0], [2, '带形洞', 0], [2, '飘窗', 0], [2, '老虎窗', 0]
];
const body = document.getElementById('layers');
for (const [lv, name, on, off] of layers) {
  const tr = document.createElement('tr');
  const lead = [
    '<button class="tog" aria-label="折叠"></button>',
    '<i class="rail"></i><button class="tog" aria-label="折叠"></button>',
    '<i class="rail"></i><i class="rail"></i><i class="dash"></i>'
  ][lv];
  tr.innerHTML = `<td><div class="cell l${lv}">${lead}<span>${name}</span></div></td>
    <td><input type="checkbox" aria-label="显示图元 ${name}" ${on === 1 ? 'checked' : ''}></td>
    <td><input type="checkbox" aria-label="显示名称 ${name}" ${off ? 'disabled' : ''}></td>`;
  if (on === 2) tr.querySelector('input').indeterminate = true;
  body.append(tr);
}

// Floor plan, drawn in model-view pixels
const out = [];
const line = (cls, w, ...ds) => out.push(`<path class="${cls}" stroke-width="${w}" d="${ds.join('')}"/>`);
const wall = (w, d) => { line('wd', w + 2, d); line('wg', w, d); };
const text = (x, y, t, extra = '') => out.push(`<text x="${x}" y="${y}" ${extra}>${t}</text>`);
const bubble = (x, y, t) => {
  let p = '';
  for (let i = 0; i < 9; i++) {
    const a = Math.PI * (2 * i / 9 + 0.5 / 9);
    p += `${(x + 12 * Math.cos(a)).toFixed(1)},${(y + 12 * Math.sin(a)).toFixed(1)} `;
  }
  out.push(`<polygon class="ax" points="${p}"/>`);
  text(x, y + 7, t);
};
const axes = [[487, '4'], [591.5, '5'], [695.5, '6'], [799.5, '7'], [903.5, '8'], [1008.5, '10']];
const rows = [[315.5, 'E'], [441.5, 'C'], [489.5, 'B'], [618.5, 'A']];
const mids = [539.5, 643.5, 747.5, 851.5, 955.5];

line('ax', 1, 'M490 272.5H1009M490 293.5H1009M490 640.5H1009M490 662.5H1009M1030.5 315V619M1052.5 315V619');
for (const [x] of axes) {
  line('ax', 1, `M${x} 250V315M${x} 619V684M${x - 2} 295.5l4-4M${x - 2} 642.5l4-4`);
}
line('ax', 1, 'M1006.5 274.5l4-4M1006.5 664.5l4-4');
for (const [y] of rows) line('ax', 1, `M1009 ${y}H1074M1028.5 ${y - 2}l4 4M1050.5 ${y - 2}l4 4`);

wall(2, 'M490 339.5H539M512.5 318V339M591 339.5H643M618 318V339M695 351.5H747M695 374.5H747M723.5 351V374M643 418H695M686.5 418V438');
wall(2, 'M490 594.5H591M514 594V615M565 594V615M695 594.5H799M722 594V615M772.5 594V615');
line('wb', 3, 'M942.5 320V417M941 361.5H1005M965.5 361V438M965 390.5H1005M940.5 493V524M933 563V571M939.5 573V593.5H985');
line('wb', 1.5, 'M631.5 615V594.5H669.5V615M644 607H649V613M490 604.5H494V612M534 614V611H546M739 614V611H750M847 614V611H856');
wall(2, 'M905 525H1005M960 525V563M905 562.5H1005M930.5 563V616M930 571.5H1005');

for (const x of mids) wall(3, `M${x} 318V438` + (x < 900 ? `M${x} 492V615` : ''));
for (const [x] of axes.slice(1, 5)) {
  line('wd', 6, `M${x} 318V616`);
  line('wg', 5, `M${x} 318V616`);
}
wall(3, 'M1006 318V617');
line('wg', 3, 'M490 317.5H1008M490 616.5H1008');
line('wg', 4, 'M490 439H1008M490 492H1008');
for (const [x] of axes.slice(1, 5)) line('red', 1, `M${x} 316V619`);
line('red', 1, 'M490 315.5H1008.5V618.5H490M490 441.5H1008M490 489.5H1008');

for (const [x, n] of axes) {
  const cx = n === '10' ? x - 8 : x - 4.5;
  for (const y of [316, 430, 490, 608]) out.push(`<rect class="pier" x="${cx}" y="${y}" width="9" height="11"/>`);
  const top = n === '7' ? 305.5 : 307.5;
  line('wb', 1.5, `M${cx + 1} 315V${top}h7V315M${cx + 1} 619v9.5h7V619`);
}
for (const [x, y] of [[580, 491], [602, 491], [668, 491], [706, 491], [772, 491], [591, 554], [695, 554], [799, 554], [903, 554], [851, 550], [959, 525], [959, 562], [970, 571], [1007, 525], [1007, 562], [942, 361], [942, 416], [965, 317], [984, 593], [1007, 445], [1007, 487], [530, 617], [548, 617], [626, 617], [652, 617], [738, 617], [842, 617], [861, 617]])
  out.push(`<rect class="pier" x="${x - 1}" y="${y - 1}" width="3" height="3"/>`);

const tag = (x, y) => {
  out.push(`<path d="M${x - 8} ${y}h6v4h-6zM${x + 2} ${y}h6v4h-6z" fill="#ff0d0d"/>`);
  line('red', 1.5, `M${x - 3} ${y + 1}q3 6 6 0`);
  out.push(`<path d="M${x - 5} ${y + 1}l6-3.500h15" fill="none" stroke="#fff" stroke-width="1.500"/>`);
  text(x + 7, y - 3, '20126', 'class="tag"');
};
for (const x of mids) {
  tag(x, 315);
  tag(x, 438);
  if (x < 900) { tag(x, 490); tag(x, 615); }
}

for (const [x, n] of axes) { bubble(x, 238.5, n); bubble(x, 696, n); }
for (const [y, n] of rows) { bubble(502, y, n); bubble(1086, y, n); }
mids.forEach((x, i) => { const t = i === 4 ? '7300' : '7200'; text(x, 290, t); text(x, 658, t); });
text(643.5, 268, '50600');
text(643.5, 680, '50600');
for (const [x, y, t] of [[1048, 379, '8750'], [1048, 465, '3300'], [1070, 467, '21000'], [1048, 554, '8950']])
  text(x, y, t, `transform="rotate(-90 ${x} ${y})"`);

out.push(`<path d="M538.5 763V746h-3l4.500-11 4.500 11h-3v17z" fill="#0f0"/>
  <path d="M542 763.5h16v-3.500l11 5-11 5v-3.500h-16z" fill="#f00"/>
  <circle cx="540" cy="765" r="5.500" fill="#0000c0"/>
  <path d="M536 723l4 5.500 4-5.500M540 728v7" fill="none" stroke="#0f0" stroke-width="1.500"/>
  <path d="M572 759l8 12M580 759l-8 12" stroke="#f00" stroke-width="1.500"/>`);
document.getElementById('plan').innerHTML = out.join('');
```
